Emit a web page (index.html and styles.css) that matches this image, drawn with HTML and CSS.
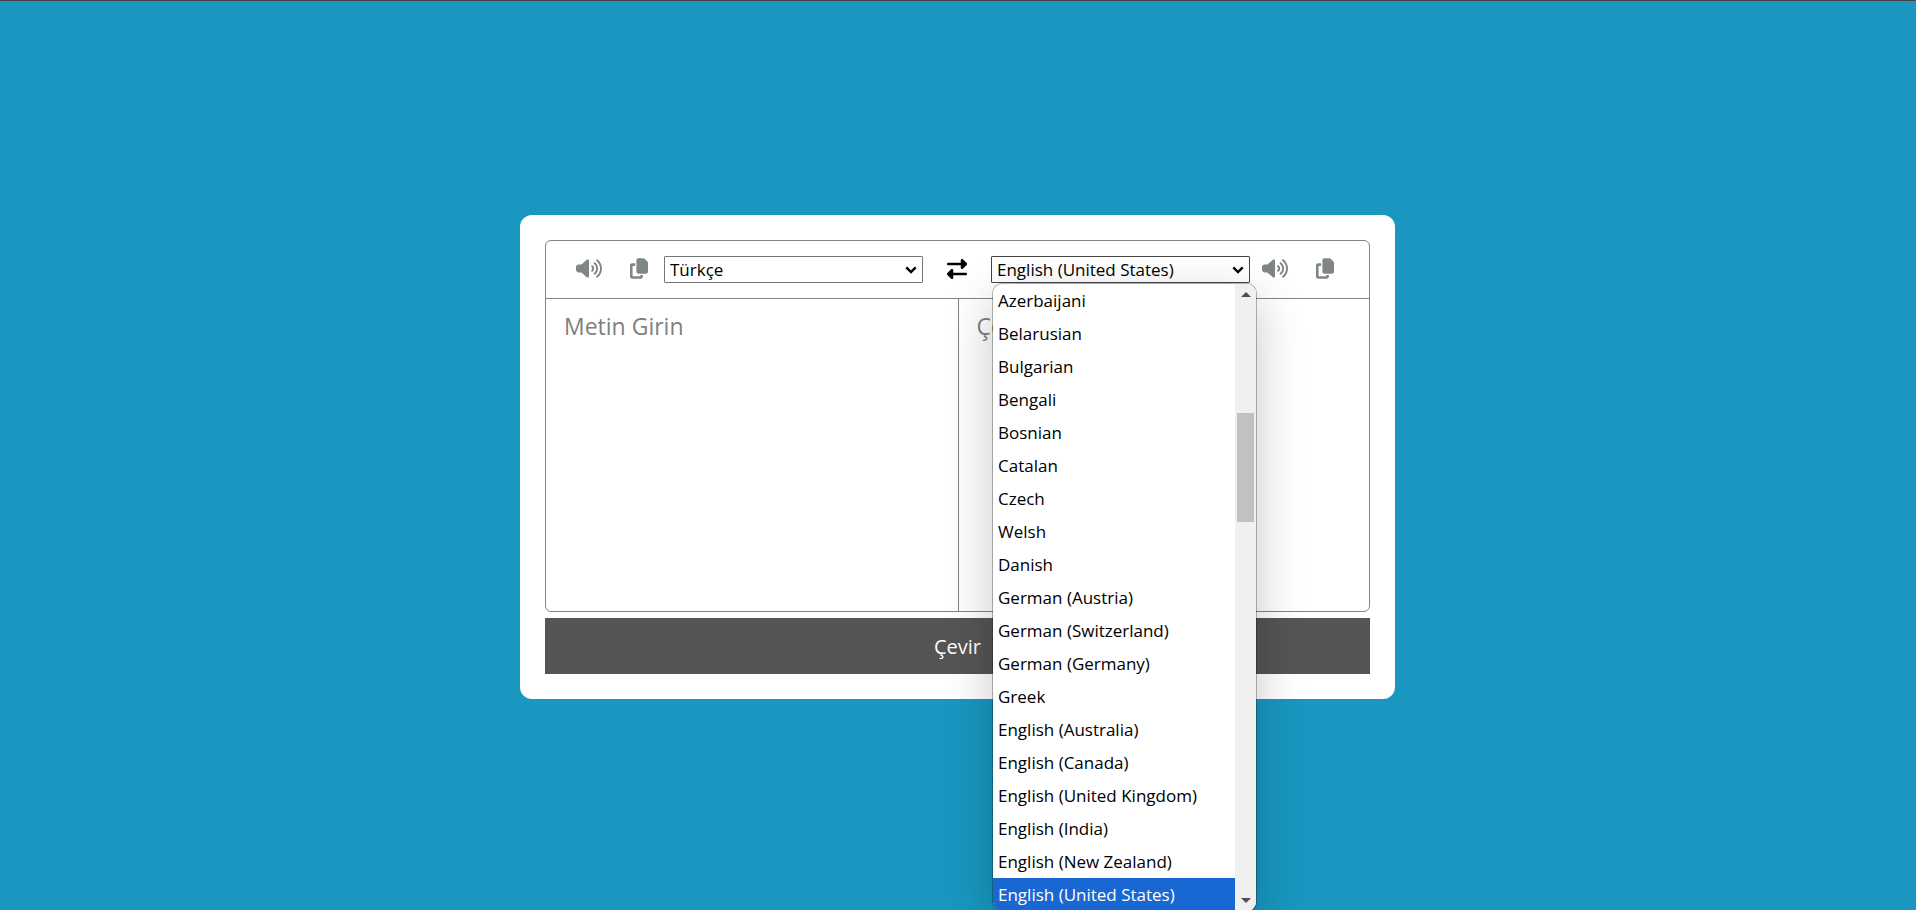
FILE: index.html
```html
<!DOCTYPE html>
<html lang="tr">
<head>
<meta charset="utf-8">
<meta name="viewport" content="width=device-width, initial-scale=1">
<title>Çeviri</title>
<link rel="stylesheet" href="styles.css">
</head>
<body>
<svg class="sprite" aria-hidden="true">
  <symbol id="volume" viewBox="0 0 640 512"><path d="M533.6 32.5C598.5 85.2 640 165.8 640 256s-41.5 170.7-106.4 223.5c-10.3 8.4-25.4 6.8-33.8-3.5s-6.8-25.4 3.5-33.8C557.5 398.2 592 331.2 592 256s-34.5-142.2-88.7-186.3c-10.3-8.4-11.8-23.5-3.5-33.8s23.5-11.8 33.8-3.5zM473.1 107c43.2 35.2 70.9 88.9 70.9 149s-27.7 113.8-70.9 149c-10.3 8.4-25.4 6.8-33.8-3.5s-6.8-25.4 3.5-33.8C475.3 341.3 496 301.1 496 256s-20.7-85.3-53.2-111.8c-10.3-8.4-11.8-23.5-3.5-33.8s23.5-11.8 33.8-3.5zm-60.5 74.5C434.1 199.1 448 225.9 448 256s-13.9 56.9-35.4 74.5c-10.3 8.4-25.4 6.8-33.8-3.5s-6.8-25.4 3.5-33.8C393.1 284.4 400 271 400 256s-6.9-28.4-17.7-37.3c-10.3-8.4-11.8-23.5-3.5-33.8s23.5-11.8 33.8-3.5zM301.1 34.8C312.6 40 320 51.4 320 64V448c0 12.6-7.4 24-18.9 29.2s-25 3.1-34.4-5.3L131.8 352H64c-35.3 0-64-28.7-64-64V224c0-35.3 28.7-64 64-64h67.8L266.7 40.1c9.4-8.4 22.9-10.4 34.4-5.3z"/></symbol>
  <symbol id="copy" viewBox="0 0 448 512"><path d="M208 0H332.1c12.7 0 24.9 5.1 33.9 14.1l67.9 67.9c9 9 14.1 21.2 14.1 33.9V336c0 26.5-21.5 48-48 48H208c-26.5 0-48-21.5-48-48V48c0-26.5 21.5-48 48-48zM48 128h80v64H64V448H256V416h64v48c0 26.5-21.5 48-48 48H48c-26.5 0-48-21.5-48-48V176c0-26.5 21.5-48 48-48z"/></symbol>
  <symbol id="swap" viewBox="0 0 512 512"><path d="M32 96l320 0V32c0-12.9 7.8-24.6 19.8-29.6s25.7-2.2 34.9 6.9l96 96c6 6 9.4 14.1 9.4 22.6s-3.4 16.6-9.4 22.6l-96 96c-9.2 9.2-22.9 11.9-34.9 6.9s-19.8-16.6-19.8-29.6V160L32 160c-17.7 0-32-14.3-32-32s14.3-32 32-32zM480 352c17.7 0 32 14.3 32 32s-14.3 32-32 32H160v64c0 12.9-7.8 24.6-19.8 29.6s-25.7 2.2-34.9-6.9l-96-96c-6-6-9.4-14.1-9.4-22.6s3.4-16.6 9.4-22.6l96-96c9.2-9.2 22.9-11.9 34.9-6.9s19.8 16.6 19.8 29.6l0 64H480z"/></symbol>
  <symbol id="chevron" viewBox="0 0 12 8"><path d="M1.3 1.4 6 6.1l4.7-4.7" fill="none" stroke="#000" stroke-width="2.4"/></symbol>
</svg>
<main class="card">
  <div class="translator">
    <div class="toolbar">
      <div class="tools">
        <button class="icon-button" type="button" aria-label="Dinle"><svg class="icon-volume"><use href="#volume"/></svg></button>
        <button class="icon-button copy-source" type="button" aria-label="Kopyala"><svg class="icon-copy"><use href="#copy"/></svg></button>
        <div class="picker">
          <select class="language" aria-label="Kaynak dil"><option>Türkçe</option></select>
          <svg class="chevron"><use href="#chevron"/></svg>
        </div>
      </div>
      <button class="icon-button swap" type="button" aria-label="Değiştir"><svg class="icon-swap"><use href="#swap"/></svg></button>
      <div class="tools">
        <div class="picker">
          <select class="language language-open" aria-label="Hedef dil"><option>English (United States)</option></select>
          <svg class="chevron"><use href="#chevron"/></svg>
          <div class="menu">
            <ul class="options" role="listbox" aria-label="Hedef dil">
              <li class="option" role="option">Azerbaijani</li>
              <li class="option" role="option">Belarusian</li>
              <li class="option" role="option">Bulgarian</li>
              <li class="option" role="option">Bengali</li>
              <li class="option" role="option">Bosnian</li>
              <li class="option" role="option">Catalan</li>
              <li class="option" role="option">Czech</li>
              <li class="option" role="option">Welsh</li>
              <li class="option" role="option">Danish</li>
              <li class="option" role="option">German (Austria)</li>
              <li class="option" role="option">German (Switzerland)</li>
              <li class="option" role="option">German (Germany)</li>
              <li class="option" role="option">Greek</li>
              <li class="option" role="option">English (Australia)</li>
              <li class="option" role="option">English (Canada)</li>
              <li class="option" role="option">English (United Kingdom)</li>
              <li class="option" role="option">English (India)</li>
              <li class="option" role="option">English (New Zealand)</li>
              <li class="option option-selected" role="option" aria-selected="true">English (United States)</li>
            </ul>
            <div class="scrollbar">
              <svg class="scroll-arrow" viewBox="0 0 10 5"><path d="M0 5 5 0l5 5z"/></svg>
              <div class="track"><div class="thumb"></div></div>
              <svg class="scroll-arrow" viewBox="0 0 10 5"><path d="M0 0l5 5 5-5z"/></svg>
            </div>
          </div>
        </div>
        <button class="icon-button listen-target" type="button" aria-label="Dinle"><svg class="icon-volume"><use href="#volume"/></svg></button>
        <button class="icon-button copy-target" type="button" aria-label="Kopyala"><svg class="icon-copy"><use href="#copy"/></svg></button>
      </div>
    </div>
    <div class="texts">
      <textarea class="text" aria-label="Metin" placeholder="Metin Girin"></textarea>
      <textarea class="text" aria-label="Çeviri" placeholder="Çeviri" readonly></textarea>
    </div>
  </div>
  <button class="submit" type="button">Çevir</button>
</main>
</body>
</html>
```
FILE: styles.css
```css
* { box-sizing: border-box; }

body {
  margin: 0;
  min-height: 100vh;
  padding: 3px 1px 0 0;
  border-top: 1px solid #444;
  display: flex;
  align-items: center;
  justify-content: center;
  overflow: hidden;
  background: #1997c0;
  font-family: "Open Sans", "Noto Sans", sans-serif;
}

button, select, textarea { font-family: inherit; }

.sprite { display: none; }

.card {
  width: 100%;
  max-width: 875px;
  padding: 25px;
  border-radius: 12px;
  background: #fff;
}

.translator {
  border: 1px solid #808486;
  border-radius: 6px;
}

.toolbar {
  display: flex;
  align-items: center;
  justify-content: space-between;
  height: 58px;
  padding: 0 35px 0 30px;
  border-bottom: 1px solid #808486;
}

.tools {
  display: flex;
  align-items: center;
}

.icon-button {
  display: flex;
  padding: 0 0 2px;
  border: 0;
  background: none;
  color: #808688;
  cursor: pointer;
}

.icon-button svg { fill: currentColor; }
.icon-volume { width: 26px; height: 21px; }
.icon-copy { width: 18px; height: 21px; }
.icon-swap { width: 20px; height: 20px; }
.copy-source { margin: 0 16px 0 28px; }
.listen-target { margin-left: 12px; }
.copy-target { margin-left: 28px; }
.swap { color: #000; }

.picker {
  flex: 0 1 259px;
  width: 259px;
  position: relative;
  display: flex;
}

.language {
  appearance: none;
  width: 100%;
  height: 27px;
  padding: 0 24px 0 5px;
  border: 1px solid #767676;
  border-radius: 1px;
  background: #fff;
  color: #000;
  font-size: 17px;
}

.language-open { border-color: #444; }

.chevron {
  position: absolute;
  right: 6px;
  top: 10px;
  width: 12px;
  height: 8px;
  pointer-events: none;
}

.menu {
  position: absolute;
  z-index: 1;
  top: 100%;
  left: 1px;
  width: 265px;
  display: flex;
  overflow: hidden;
  border: 1px solid rgba(0, 0, 0, 0.28);
  border-radius: 10px;
  background: #fff;
  background-clip: padding-box;
  box-shadow: 0 16px 48px rgba(0, 0, 0, 0.22);
}

.options {
  flex: 1;
  margin: 0;
  padding: 0;
  list-style: none;
}

.option {
  height: 33px;
  padding-left: 5px;
  line-height: 33px;
  font-size: 17px;
  color: #000;
}

.option-selected { background: #1967d2; color: #fff; }

.scrollbar {
  width: 21px;
  padding: 8px 2px;
  display: flex;
  flex-direction: column;
  align-items: center;
  background: #f0f0f0;
}

.scroll-arrow { width: 10px; height: 5px; fill: #505050; }
.track { flex: 1; width: 100%; padding-top: 116px; }
.thumb { height: 109px; background: #c1c1c1; }

.texts {
  display: grid;
  grid-template-columns: 1fr 1fr;
}

.text {
  display: block;
  height: 312px;
  padding: 12px 18px;
  border: 0;
  border-radius: 6px;
  outline: 0;
  resize: none;
  background: transparent;
  font-size: 23px;
  line-height: 30px;
}

.text + .text {
  border-left: 1px solid #808486;
  border-radius: 0;
}

.text::placeholder { color: #808080; }

.submit {
  display: block;
  width: 100%;
  height: 56px;
  margin-top: 6px;
  border: 0;
  background: #555;
  color: #fff;
  font-size: 20px;
  font-weight: 500;
}
```
